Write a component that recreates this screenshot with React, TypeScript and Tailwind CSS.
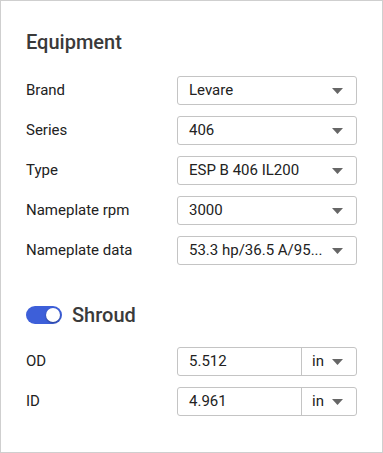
import React from "react";

type SelectProps = {
  value: string;
};

const Caret = () => (
  <svg width="11" height="6" viewBox="0 0 11 6" className="shrink-0">
    <path d="M0 0 L11 0 L5.5 6 Z" fill="#666" />
  </svg>
);

const Select = ({ value }: SelectProps) => (
  <div className="flex h-[29px] w-[180px] items-center justify-between rounded-[3px] border border-[#c4c4c4] bg-white pl-[11px] pr-[13px]">
    <span className="whitespace-nowrap text-[15px] text-[#222]">{value}</span>
    <span className="ml-2">
      <Caret />
    </span>
  </div>
);

const UnitInput = ({ value }: SelectProps) => (
  <div className="flex h-[29px] w-[180px] rounded-[3px] border border-[#c4c4c4] bg-white">
    <div className="flex w-[124px] items-center border-r border-[#c4c4c4] pl-[11px] text-[15px] text-[#222]">
      {value}
    </div>
    <div className="flex flex-1 items-center justify-between pl-[10px] pr-[13px] text-[15px] text-[#222]">
      <span>in</span>
      <Caret />
    </div>
  </div>
);

const Row = ({ label, children }: { label: string; children: React.ReactNode }) => (
  <div className="flex h-[29px] items-center justify-between">
    <span className="text-[15px] text-[#222]">{label}</span>
    {children}
  </div>
);

export default function App() {
  const rows = [
    ["Brand", "Levare"],
    ["Series", "406"],
    ["Type", "ESP B 406 IL200"],
    ["Nameplate rpm", "3000"],
    ["Nameplate data", "53.3 hp/36.5 A/95..."],
  ];
  return (
    <div
      className="h-[453px] w-[383px] border border-[#cfcfcf] bg-white pl-[25px] pr-[25px]"
      style={{ fontFamily: "Roboto, 'Liberation Sans', sans-serif" }}
    >
      <h2 className="pt-[29px] text-[20px] font-medium leading-[24px] text-[#3a3a3a]">
        Equipment
      </h2>
      <div className="mt-[22px] flex flex-col gap-[11px]">
        {rows.map(([label, value]) => (
          <Row key={label} label={label}>
            <Select value={value} />
          </Row>
        ))}
      </div>
      <div className="mt-[38px] flex items-center gap-[10px]">
        <div className="relative h-[18px] w-[36px] rounded-full bg-[#3d5fd9]">
          <div className="absolute right-[2px] top-[2px] h-[14px] w-[14px] rounded-full bg-white shadow-[0_1px_2px_rgba(0,0,0,0.35)]" />
        </div>
        <span className="text-[20px] font-medium leading-[24px] text-[#3a3a3a]">Shroud</span>
      </div>
      <div className="mt-[20px] flex flex-col gap-[11px]">
        <Row label="OD">
          <UnitInput value="5.512" />
        </Row>
        <Row label="ID">
          <UnitInput value="4.961" />
        </Row>
      </div>
    </div>
  );
}
